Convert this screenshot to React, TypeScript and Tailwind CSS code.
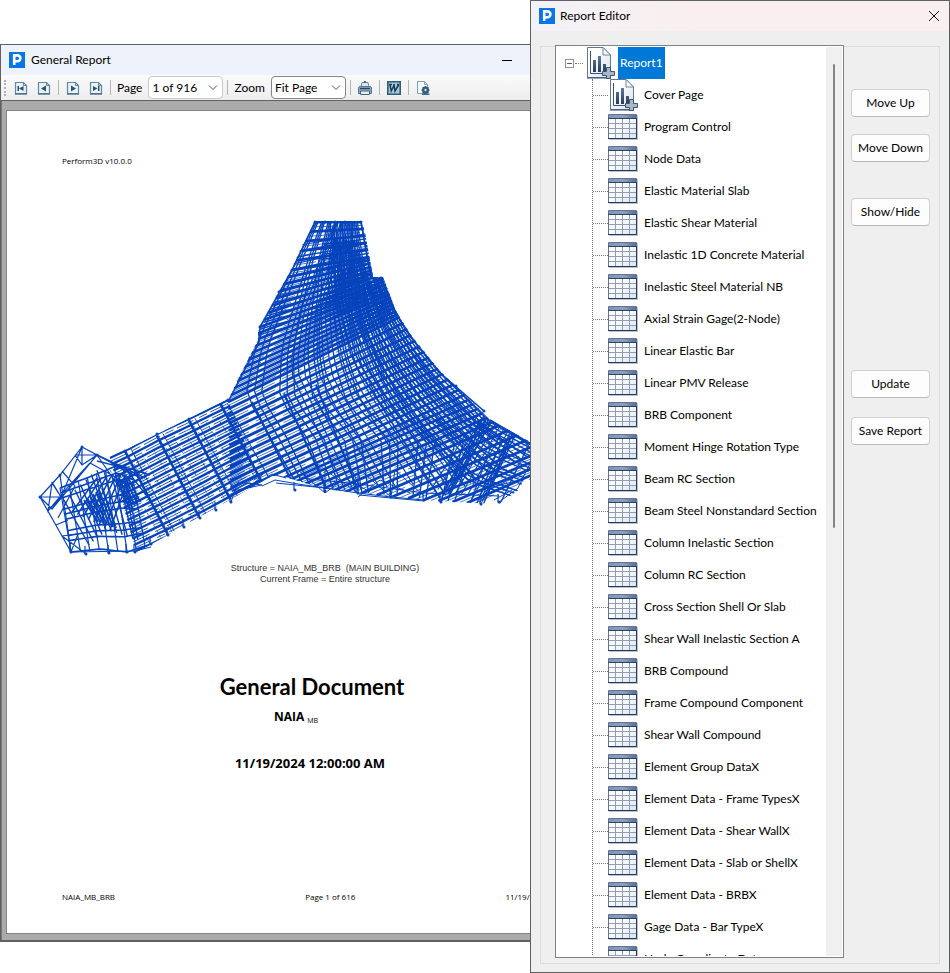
import { ReactNode } from "react";

type Point = [number, number];

const treeItems = [
  "Program Control",
  "Node Data",
  "Elastic Material Slab",
  "Elastic Shear Material",
  "Inelastic 1D Concrete Material",
  "Inelastic Steel Material NB",
  "Axial Strain Gage(2-Node)",
  "Linear Elastic Bar",
  "Linear PMV Release",
  "BRB Component",
  "Moment Hinge Rotation Type",
  "Beam RC Section",
  "Beam Steel Nonstandard Section",
  "Column Inelastic Section",
  "Column RC Section",
  "Cross Section Shell Or Slab",
  "Shear Wall Inelastic Section A",
  "BRB Compound",
  "Frame Compound Component",
  "Shear Wall Compound",
  "Element Group DataX",
  "Element Data - Frame TypesX",
  "Element Data - Shear WallX",
  "Element Data - Slab or ShellX",
  "Element Data - BRBX",
  "Gage Data - Bar TypeX",
  "Node Coordinate Data",
];

const mix = (p: Point, q: Point, k: number): Point => [
  p[0] + (q[0] - p[0]) * k,
  p[1] + (q[1] - p[1]) * k,
];

const xy = (p: Point) => `${p[0].toFixed(1)} ${p[1].toFixed(1)}`;

// Point at fraction t along a polyline
function along(line: Point[], t: number): Point {
  const lengths = line
    .slice(1)
    .map((p, i) => Math.hypot(p[0] - line[i][0], p[1] - line[i][1]));
  let rest = t * lengths.reduce((a, b) => a + b, 0);
  for (let i = 0; i < lengths.length; i++) {
    if (rest <= lengths[i] || i === lengths.length - 1) {
      return mix(line[i], line[i + 1], Math.min(1, rest / lengths[i]));
    }
    rest -= lengths[i];
  }
  return line[0];
}

// "rungs" join two edges, "rails" run beside them
function rungs(a: Point[], b: Point[], count: number) {
  let d = "";
  for (let i = 0; i <= count; i++) {
    d += `M${xy(along(a, i / count))}L${xy(along(b, i / count))}`;
  }
  return d;
}

function rails(a: Point[], b: Point[], count: number, bunch = 0) {
  let d = "";
  for (let i = 0; i <= count; i++) {
    const k = (i - (i % 3) * bunch) / count;
    for (let s = 0; s <= 16; s++) {
      d += (s ? "L" : "M") + xy(mix(along(a, s / 16), along(b, s / 16), k));
    }
  }
  return d;
}

// Floor lines: each pair of ends is followed by the number of lines up to the next pair
const floors: [Point, Point, number][] = [
  [[315, 222], [361, 222], 5],
  [[292, 270], [376, 256], 8],
  [[260, 327], [410, 272], 11],
  [[228, 402], [430, 302], 14],
  [[231, 502], [484, 386], 2],
  [[290, 484], [492, 396], 5],
  [[345, 492], [512, 420], 5],
  [[424, 500], [540, 452], 4],
  [[481, 504], [540, 478], 1],
];

function floorLines(multiple: number) {
  let d = "";
  floors.slice(0, -1).forEach(([a, b, n], i) => {
    const [c, e] = floors[i + 1];
    const count = n * multiple;
    for (let j = 0; j < count; j++) {
      d += `M${xy(mix(a, c, j / count))}L${xy(mix(b, e, j / count))}`;
    }
  });
  return d;
}

const leftColumn: Point[] = [[315, 222], [285, 285], [256, 345], [246, 395], [298, 486]];
const rightColumn: Point[] = [[361, 222], [371, 278], [385, 295], [410, 336], [439, 372], [470, 402], [490, 420], [530, 442], [499, 506]];
const outerRight: Point[] = [[381, 278], [395, 312], [410, 336], [439, 372], [470, 402], [490, 422], [540, 450]];
const lowerRight: Point[] = [[350, 290], [365, 340], [385, 385], [412, 425], [450, 462], [470, 482], [515, 497]];
const wingTop: Point[] = [[110, 458], [125, 451], [157, 434], [189, 419], [228, 400]];
const wingBottom: Point[] = [[136, 551], [168, 536], [200, 520], [231, 503], [262, 486]];
const headTop: Point[] = [[60, 488], [92, 476], [116, 466], [132, 474]];
const headBottom: Point[] = [[71, 552], [100, 549], [127, 552], [145, 546]];

const feet: Point[] = [
  [71, 552], [86, 554], [109, 553], [127, 552], [135, 552], [151, 544], [168, 535], [184, 527],
  [200, 518], [216, 510], [231, 502], [295, 490], [325, 491], [358, 493], [391, 497], [424, 500],
  [441, 502], [481, 504], [499, 502],
];
const nodes: Point[] = [
  [40, 497], [82, 447], [97, 455], [60, 475], [125, 451], [157, 434], [189, 419], [221, 405],
  [315, 222], [325, 222], [335, 222], [345, 222], [361, 222], [381, 278], [292, 270], [279, 292],
  [260, 327], [260, 335], [250, 358], [240, 378], [395, 312], [402, 324], [410, 336], [419, 348],
  [429, 360], [439, 372], [447, 380], [456, 386], [470, 402], [484, 411], [491, 422], [512, 434],
  [228, 400], [366, 246],
];

function StructureModel() {
  return (
    <svg viewBox="0 0 582 350" className="block w-[582px] shrink-0" fill="none" stroke="#0744bc">
      <defs>
        <clipPath id="outline">
          <path d="M313 221H363L373 277H383L396 311 411 335 440 371 471 401 490 420 560 458 520 489 499 504 424 501 325 489 285 477 272 476 226 502 136 553H68L38 497 82 444 98 455 125 450 228 399 258 340V327L291 270Z" />
        </clipPath>
      </defs>
      <g transform="translate(-36 -214)">
        <g clipPath="url(#outline)">
          {/* Floors */}
          <path d={floorLines(1)} strokeWidth="2.8" />
          <path d={floorLines(2)} strokeWidth="0.7" strokeDasharray="22 8" />
          <path d={rungs([[300, 245], [258, 335]], [[376, 232], [420, 290]], 14)} strokeWidth="1.2" />
          {/* Columns */}
          <path d={rails(leftColumn, rightColumn, 21, 0.32)} strokeWidth="1.3" />
          <path d={rails([[330, 222], [338, 300], [352, 360], [440, 498]], outerRight, 12, 0.3)} strokeWidth="1.6" />
          <path d={rails([[335, 222], [300, 310], [290, 370], [345, 490]], [[355, 222], [358, 310], [400, 390], [470, 480]], 11, 0.3)} strokeWidth="1.2" />
          <path d={rungs([[322, 244], [326, 320]], [[358, 242], [368, 302]], 15)} strokeWidth="1.5" />
          <path d={rails([[334, 240], [336, 310]], [[354, 240], [360, 300]], 7)} strokeWidth="1.8" />
          {/* Right wing */}
          <path d={rails(lowerRight, outerRight, 11, 0.3)} strokeWidth="1.4" />
          <path d={rungs([[432, 488], [478, 500]], [[478, 415], [512, 434]], 8)} strokeWidth="1.1" />
          <path d={rails([[444, 492], [484, 416]], [[450, 494], [492, 420]], 3)} strokeWidth="1.6" />
          <path d={rails([[480, 502], [510, 433]], [[485, 500], [515, 435]], 2)} strokeWidth="1.4" />
          {/* Left wing */}
          <path d={rails(wingTop, wingBottom, 15)} strokeWidth="2.4" />
          <path d={rails(wingTop, wingBottom, 30)} strokeWidth="0.9" strokeDasharray="18 6 9 4" />
          <path d={rungs([[125, 451], [221, 405]], [[168, 535], [264, 486]], 3)} strokeWidth="2.6" />
          <path d={rungs([[131, 449], [227, 403]], [[174, 531], [270, 480]], 3)} strokeWidth="1" />
          <path d={rungs([[252, 402], [316, 385]], [[294, 486], [358, 490]], 2)} strokeWidth="2" />
          <path d={rungs([[110, 470], [228, 412]], [[150, 544], [270, 478]], 11)} strokeWidth="0.7" strokeDasharray="3 2" />
          <path d="M97 461 125 468 150 500M97 455 145 478M110 462 150 475" strokeWidth="1.4" />
          {/* Wing head */}
          <path d={rails(headTop, headBottom, 9, 0.3)} strokeWidth="1.6" />
          <path d={rungs(headTop, headBottom, 8)} strokeWidth="1.2" />
          <path d={rungs([[64, 500], [96, 470], [126, 478]], [[89, 545], [108, 530], [138, 540]], 10)} strokeWidth="1.4" />
          <path d={rungs([[97, 478], [130, 474]], [[72, 512], [110, 530]], 7)} strokeWidth="1.5" />
          <path d={rails([[84, 500], [98, 522]], [[102, 488], [116, 528]], 6)} strokeWidth="2" />
          <path d={rails([[118, 482], [130, 510]], [[128, 478], [140, 502]], 4)} strokeWidth="2" />
        </g>
        {/* Bracing at the wing end */}
        <path
          d="M40 497 60 475 82 447 97 455 52 509 40 497M52 482 61 497M60 475 71 552M40 497 71 552 135 551 151 547M40 497 61 497 48 511 52 483 61 497 82 447M75 455 97 455 82 465 75 455M82 447V465M62 471 75 486 58 518M56 525 68 520M62 536 78 534 71 552M62 536 86 554M48 511 68 487 90 463M97 455 140 478M90 463 130 485M97 455 128 500"
          strokeWidth="1.2"
        />
        {/* Edge bracing along the base */}
        <path
          d="M231 502 238 482 262 485 232 491 264 473 250 488 272 474 286 478M262 486 275 480 298 484 325 488M276 483 325 488 358 493 391 497 424 500M298 470 325 493V470L358 493V468L391 497 395 470 424 496M325 493 345 478 370 492M358 497 380 480 410 493M300 478 359 484 424 493 499 496M359 495 424 501M441 500 448 484 470 466M481 504 490 485 512 434M499 502 518 488 534 455M481 490 520 480M494 500 512 490M484 492 534 468"
          strokeWidth="1"
        />
        <path d="M315 222 292 270 260 327 259 342 228 402M361 222 371 278H381L395 312 410 336 439 372 484 411M315 222H361M490 420 540 449" strokeWidth="1.6" />
        {feet.map(([x, y]) => (
          <path key={`${x}-${y}`} d={`M${x - 1} ${y - 8}V${y}`} strokeWidth="1.2" />
        ))}
        {[...feet, ...nodes].map(([x, y]) => (
          <circle key={`${x}-${y}`} cx={x} cy={y} r="1.5" fill="#0744bc" stroke="none" />
        ))}
      </g>
    </svg>
  );
}

function AppLogo() {
  return (
    <svg viewBox="0 0 16 16" className="size-4">
      <path d="M0 0H16V16H0Z" fill="#0877e6" />
      <path d="M5.2 13V3.4H8.5A2.8 2.8 0 0 1 8.5 9.2H5.2" fill="none" stroke="#fff" strokeWidth="2.6" />
    </svg>
  );
}

function PageIcon({ children }: { children: ReactNode }) {
  return (
    <svg viewBox="0 0 14 14" className="size-[14px]">
      <path d="M1.5 1.5H9.5L12.5 4.5V12.5H1.5Z" fill="#e9f2f7" stroke="#6289a1" strokeWidth="1.2" />
      <path d="M9.5 1V4.5H13" fill="none" stroke="#6289a1" />
      <path d="M1 13H13" stroke="#456f8b" strokeWidth="1.4" />
      <g fill="#29536f">{children}</g>
    </svg>
  );
}

function PrinterIcon() {
  return (
    <svg viewBox="0 0 14 14" className="size-[14px]">
      <path d="M4 1.5H10L11 6H3Z" fill="#dce8f0" stroke="#658ba6" />
      <path d="M7 0V2" stroke="#486b86" strokeWidth="2" />
      <path d="M.5 7Q.5 5.5 2.5 5.5H11.5Q13.5 5.5 13.5 7V12.5H.5Z" fill="#8fa9bf" stroke="#56758e" />
      <path d="M2 7.5H12" stroke="#2c4458" strokeWidth="1.3" />
      <path d="M2.5 10H11.5V13.5H2.5Z" fill="#e9f0f5" stroke="#46667f" />
    </svg>
  );
}

function WordIcon() {
  return (
    <svg viewBox="0 0 14 14" className="size-[14px]">
      <path d="M.8.8H13.2V13.2H.8Z" fill="#a9c9da" stroke="#315c78" strokeWidth="1.6" />
      <path d="M3 4 4.2 10 7 4.5 8 10 11.5 4M2 3.5H5M6 4H8M10 3.5H12" fill="none" stroke="#173f5b" strokeWidth="1.5" />
    </svg>
  );
}

function SettingsPageIcon() {
  return (
    <svg viewBox="0 0 14 14" className="size-[14px]">
      <path d="M1.5.5H8.5L11.5 3.5V12.5H1.5Z" fill="#f7fafc" stroke="#7fa0b5" />
      <path d="M8.5.5V3.5H11.5" fill="none" stroke="#7fa0b5" />
      <path d="M6 13.2H13.5" stroke="#315d79" strokeWidth="1.4" />
      <circle cx="9.5" cy="9" r="2.4" fill="none" stroke="#315d79" strokeWidth="2.2" />
      <path d="M9.5 5V13M5.5 9H13.5M6.7 6.2 12.3 11.8M12.3 6.2 6.7 11.8" stroke="#315d79" strokeWidth="1.4" />
      <circle cx="9.5" cy="9" r="1.2" fill="#cfdee8" />
    </svg>
  );
}

function ReportIcon() {
  return (
    <svg viewBox="0 0 29 32" className="h-8 w-[29px] shrink-0">
      <defs>
        <linearGradient id="bar" x2="0" y2="1">
          <stop stopColor="#5a7ca5" />
          <stop offset="1" stopColor="#263b55" />
        </linearGradient>
        <linearGradient id="paper" x2="1" y2="1">
          <stop offset=".3" stopColor="#fff" />
          <stop offset="1" stopColor="#d5dfec" />
        </linearGradient>
      </defs>
      <path d="M1.5.5H17L24.5 8V30.5H1.5Z" fill="url(#paper)" stroke="#5c789b" />
      <path d="M1 31H25" stroke="#344e6d" />
      <path d="M17 .5V8H24.5Z" fill="#fff" stroke="#6e86a3" />
      <path d="M4.5 4V26.5H22" fill="none" stroke="#3c526e" />
      <path d="M7 13H10V25H7ZM12 9H15V25H12ZM17 17H20V25H17Z" fill="url(#bar)" />
      <path d="M20.5 20.5H24.5V24.5H28.5V28.5H24.5V31.5H20.5V28.5H16.5V24.5H20.5Z" fill="#a9b7cd" stroke="#3f526e" />
    </svg>
  );
}

function TableIcon() {
  return (
    <svg viewBox="0 0 30 26" className="h-[26px] w-[30px] shrink-0">
      <defs>
        <linearGradient id="sheet" x2="1" y2="1">
          <stop offset=".4" stopColor="#fff" />
          <stop offset="1" stopColor="#dce2ed" />
        </linearGradient>
        <linearGradient id="head">
          <stop stopColor="#8193ae" />
          <stop offset=".5" stopColor="#8fa0b9" />
          <stop offset="1" stopColor="#5b7190" />
        </linearGradient>
      </defs>
      <path d="M1 1H30V26H1Z" fill="#b9c4d3" />
      <path d="M.5.5H28.5V24.5H.5Z" fill="url(#sheet)" stroke="#5a7698" />
      <path d="M1 1H28V4H1Z" fill="url(#head)" />
      <path d="M0 4.5H29" stroke="#2c4361" />
      <path d="M1 9.5H28M1 14.5H28M1 19.5H28M7.5 5V24M14.5 5V24M21.5 5V24" stroke="#8c9fb8" />
      <path d="M0 24.5H28.5V5" fill="none" stroke="#243a58" />
    </svg>
  );
}

function ToolButton({ label, children }: { label: string; children: ReactNode }) {
  return (
    <button aria-label={label} className="flex size-[22px] shrink-0 items-center justify-center hover:bg-[#d8e6f2]">
      {children}
    </button>
  );
}

function Divider() {
  return <span className="mx-[3px] h-[15px] w-px shrink-0 bg-[#b5b5b5]" />;
}

function ToolSelect({ id, label, value, className }: { id: string; label: string; value: string; className: string }) {
  return (
    <div className="flex shrink-0 items-center gap-1.5 pr-px pl-[3px]">
      <label htmlFor={id}>{label}</label>
      <div className={`relative h-[23px] w-[75px] rounded-sm border bg-white ${className}`}>
        <select id={id} defaultValue={value} className="h-full w-full appearance-none bg-transparent pr-5 pl-[3px] outline-none">
          <option>{value}</option>
        </select>
        <svg viewBox="0 0 10 6" className="pointer-events-none absolute top-2 right-1 h-[6px] w-[10px]" fill="none" stroke="#555">
          <path d="M1 .5 5 4.5 9 .5" />
        </svg>
      </div>
    </div>
  );
}

function ReportWindow() {
  return (
    <section className="mt-11 mb-[31px] flex min-w-0 flex-1 flex-col overflow-hidden border-t border-b-2 border-l border-[#5f6062] bg-[#ababab]">
      <header className="flex h-[30px] shrink-0 items-center gap-1.5 bg-[#eef3fb] pr-[18px] pl-2">
        <AppLogo />
        <h1 className="flex-1">General Report</h1>
        <button aria-label="Minimize" className="flex h-6 w-[10px] items-center">
          <span className="h-px w-full bg-black" />
        </button>
      </header>
      <div className="flex h-[26px] shrink-0 items-center border-b border-[#5f6062] bg-linear-to-b from-[#fbfbfb] to-[#ededed] pl-[3px]">
        <span className="mr-1 h-4 border-l-2 border-dotted border-[#b5b0b5]" />
        <div className="flex gap-px">
          <ToolButton label="First page">
            <PageIcon>
              <path d="M3.5 5H5V10H3.5ZM9.5 5V10L5 7.5Z" />
            </PageIcon>
          </ToolButton>
          <ToolButton label="Previous page">
            <PageIcon>
              <path d="M9 4.5V10.5L4 7.5Z" />
            </PageIcon>
          </ToolButton>
        </div>
        <Divider />
        <div className="flex gap-px">
          <ToolButton label="Next page">
            <PageIcon>
              <path d="M5 4.5V10.5L10 7.5Z" />
            </PageIcon>
          </ToolButton>
          <ToolButton label="Last page">
            <PageIcon>
              <path d="M4 5V10L8.5 7.5ZM9 5H10.5V10H9Z" />
            </PageIcon>
          </ToolButton>
        </div>
        <Divider />
        <ToolSelect id="page" label="Page" value="1 of 916" className="border-[#c9c9c9]" />
        <Divider />
        <ToolSelect id="zoom" label="Zoom" value="Fit Page" className="border-[#858585]" />
        <Divider />
        <ToolButton label="Print">
          <PrinterIcon />
        </ToolButton>
        <Divider />
        <ToolButton label="Export to Word">
          <WordIcon />
        </ToolButton>
        <Divider />
        <ToolButton label="Page setup">
          <SettingsPageIcon />
        </ToolButton>
      </div>
      <div className="min-h-0 flex-1 border-l border-[#77787a] pt-[9px] pb-[6px] pl-1">
        <article className="flex h-full w-[638px] flex-col border border-[#858585] bg-white px-[55px] font-['Open_Sans',sans-serif] text-[8px] leading-3">
          <p className="mt-[44px]">Perform3D v10.0.0</p>
          <div className="-ml-[26px] mt-[47px] flex">
            <StructureModel />
          </div>
          <p className="-mt-px text-center font-['Liberation_Sans',sans-serif] text-[9px] leading-[11px] whitespace-pre text-[#333]">
            {"Structure = NAIA_MB_BRB  (MAIN BUILDING)\nCurrent Frame = Entire structure"}
          </p>
          <div className="mr-[26px] text-center">
            <h2 className="mt-[88px] font-['Lato',sans-serif] text-[22px] leading-7 font-bold">General Document</h2>
            <p className="mt-2 mr-8 text-xs leading-4 font-bold">
              NAIA <sub className="text-[7px] font-normal">MB</sub>
            </p>
            <p className="mt-[30px] mr-1 text-[13px] leading-4 font-bold">11/19/2024 12:00:00 AM</p>
          </div>
          <footer className="-mr-2 mt-auto mb-[30px] flex justify-between whitespace-nowrap">
            <span>NAIA_MB_BRB</span>
            <span className="ml-10">Page 1 of 616</span>
            <span>11/19/2024 12:00:00 AM</span>
          </footer>
        </article>
      </div>
    </section>
  );
}

function TreeRow({ label, children }: { label: string; children: ReactNode }) {
  return (
    <li className="flex h-8 items-center">
      <span className="w-[15px] shrink-0 border-t border-dotted border-[#777]" />
      <div className="flex w-[30px] shrink-0 justify-center">{children}</div>
      <span className="ml-1.5 whitespace-nowrap">{label}</span>
    </li>
  );
}

function SideButton({ label, className }: { label: string; className: string }) {
  return (
    <button className={`h-7 w-full rounded border border-[#cfcfcf] border-b-[#bababa] bg-[#fdfdfd] whitespace-nowrap hover:bg-[#e5f1fb] ${className}`}>
      {label}
    </button>
  );
}

function ReportEditor() {
  return (
    <section className="flex w-[420px] shrink-0 flex-col border border-[#5f6062] bg-[#efefef]">
      <header className="flex h-[30px] shrink-0 items-center gap-[5px] bg-linear-to-r from-[#f3f2f8] to-[#faefee] to-40% pr-[10px] pl-2">
        <AppLogo />
        <h1 className="flex-1">Report Editor</h1>
        <button aria-label="Close">
          <svg viewBox="0 0 10 10" className="size-[10px]" stroke="#111">
            <path d="M0 0 10 10M10 0 0 10" />
          </svg>
        </button>
      </header>
      <div className="mx-[9px] mt-[15px] mb-[8px] flex min-h-0 flex-1 border border-[#dcdcdc]">
        <div className="-mt-0.5 mb-[5px] ml-[14px] flex min-w-0 flex-1 overflow-hidden border border-[#7f8389] bg-white p-px">
          <div className="min-w-0 flex-1 overflow-hidden pl-2">
            <div className="flex h-8 items-center">
              <button aria-label="Collapse" className="flex size-[9px] items-center justify-center border border-[#919191]">
                <span className="h-px w-[5px] bg-[#3f5f95]" />
              </button>
              <span className="mr-[3px] ml-px w-2 border-t border-dotted border-[#777]" />
              <ReportIcon />
              <span className="ml-[3px] flex h-8 items-center bg-[#0078d7] px-[2px] text-white">Report1</span>
            </div>
            <ul className="ml-[27px] border-l border-dotted border-[#777]">
              <TreeRow label="Cover Page">
                <ReportIcon />
              </TreeRow>
              {treeItems.map((item) => (
                <TreeRow key={item} label={item}>
                  <TableIcon />
                </TreeRow>
              ))}
            </ul>
          </div>
          <div className="flex w-4 shrink-0 justify-center bg-[#f0f0f0] pt-[17px]">
            <span className="h-[52%] w-[2px] rounded bg-[#858585]" />
          </div>
        </div>
        <div className="mr-[9px] ml-[7px] w-[79px] shrink-0 pt-[42px]">
          <SideButton label="Move Up" className="" />
          <SideButton label="Move Down" className="mt-[17px]" />
          <SideButton label="Show/Hide" className="mt-9" />
          <SideButton label="Update" className="mt-36" />
          <SideButton label="Save Report" className="mt-[19px]" />
        </div>
      </div>
    </section>
  );
}

export default function App() {
  return (
    <main className="flex h-screen overflow-hidden bg-white font-['Lato',sans-serif] text-xs text-black">
      <ReportWindow />
      <ReportEditor />
    </main>
  );
}
